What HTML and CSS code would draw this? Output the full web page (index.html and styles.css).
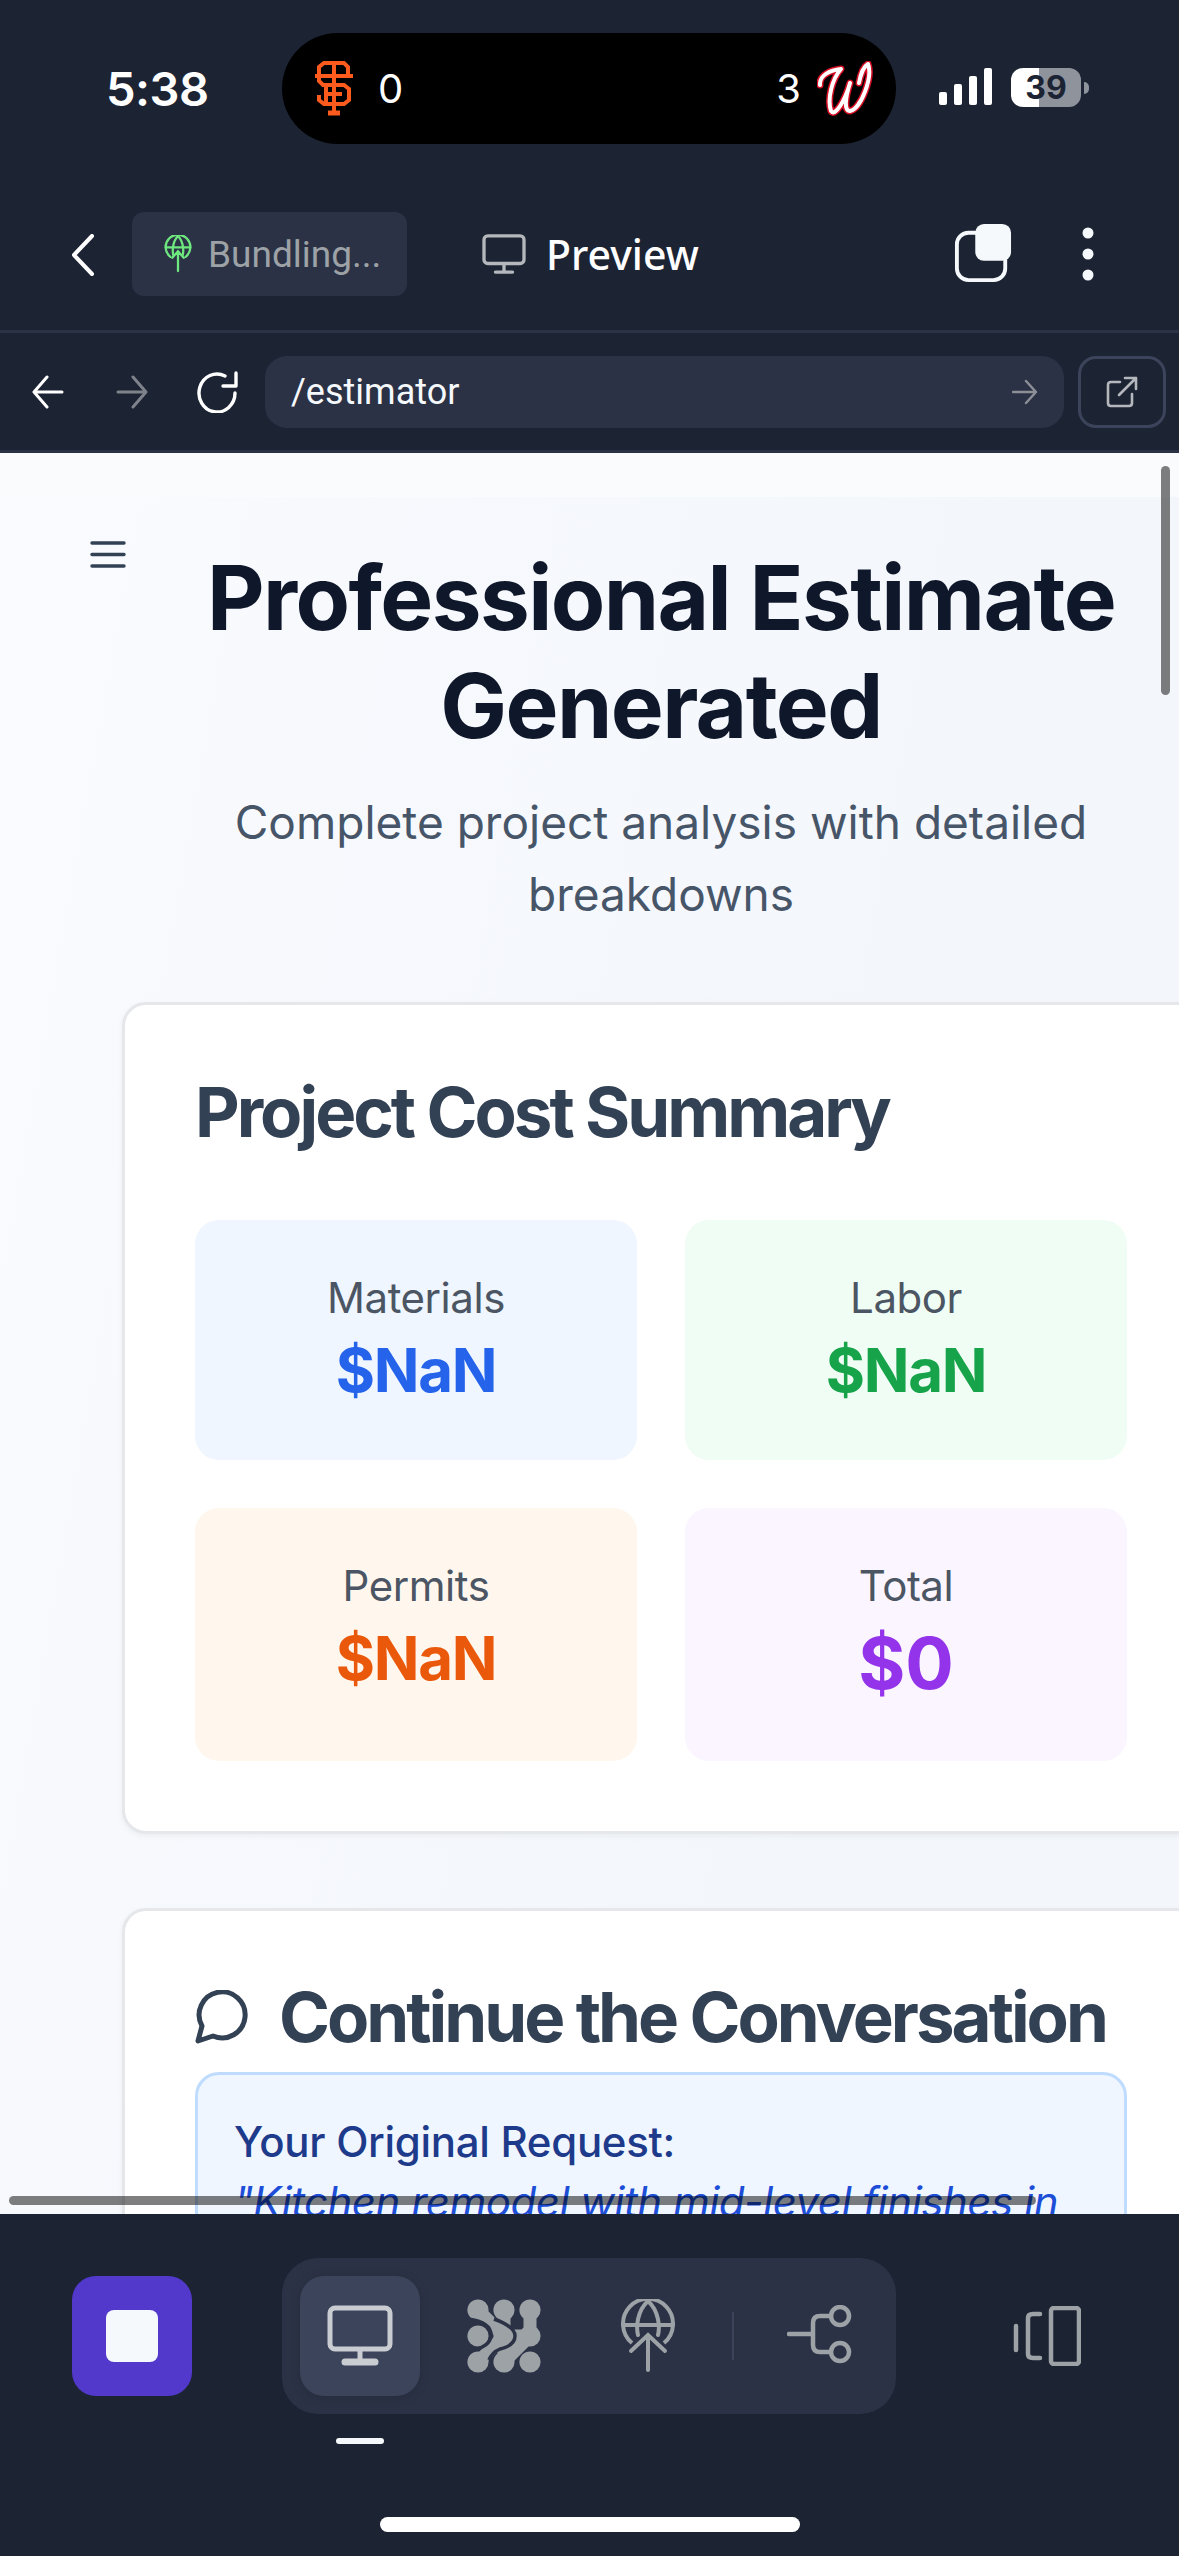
FILE: index.html
```html
<!DOCTYPE html>
<html>
    <head>
        <meta charset="UTF-8">
        <title>Professional Estimate Generated</title>
        <link rel="stylesheet" href="styles.css">
    </head>
    <body>
        <div class="status-bar">
            <span class="clock">5:38</span>
            <div class="island">
                <svg class="team-logo" width="38" height="55" viewBox="0 0 38 55" fill="none" stroke="#fd5a1e" stroke-width="4">
                    <path d="M33 15V6L29 2H9L4 6V20L8 24H29L34 28V39L29 43H9L4 39V34"/>
                    <path d="M0 15H38M19 2V53M11 33H27M11 24V43"/>
                    <path d="M13 52H25" stroke-width="5"/>
                </svg>
                <span class="score">0</span>
                <span class="score score-right">3</span>
                <svg class="team-logo" width="56" height="56" viewBox="0 0 56 56" fill="none" stroke-linecap="round" stroke-linejoin="round">
                    <path class="w-outline" d="M3 24C2 14 14 9 24 8C15 18 10 38 14 50C18 56 28 40 33 22C28 38 27 50 33 50C44 48 56 16 51 3C46 6 43 16 42 22"/>
                    <path class="w-fill" d="M3 24C2 14 14 9 24 8C15 18 10 38 14 50C18 56 28 40 33 22C28 38 27 50 33 50C44 48 56 16 51 3C46 6 43 16 42 22"/>
                </svg>
            </div>
            <svg class="signal" width="54" height="37" viewBox="0 0 54 37" fill="#fff">
                <rect x="0" y="24" width="8" height="13" rx="2"/>
                <rect x="15" y="16" width="8" height="21" rx="2"/>
                <rect x="30" y="8" width="8" height="29" rx="2"/>
                <rect x="45" y="0" width="8" height="37" rx="2"/>
            </svg>
            <div class="battery"><span>39</span></div>
            <div class="battery-nub"></div>
        </div>

        <div class="top-bar">
            <svg class="top-back" width="24" height="42" viewBox="0 0 24 42" fill="none" stroke="#fff" stroke-width="4" stroke-linecap="round" stroke-linejoin="round">
                <path d="M21 2L3 21L21 40"/>
            </svg>
            <div class="bundling">
                <svg width="28" height="38" viewBox="0 0 28 40" fill="none" stroke="#6ee77f" stroke-width="2.4" stroke-linecap="round">
                    <path d="M6 23A13 13 0 1 1 22 23"/>
                    <path d="M14 1C8 7 8 17 9 21M14 1C20 7 20 17 19 21M1 13H27"/>
                    <path d="M14 38V17M8 24L14 17L20 24"/>
                </svg>
                <span>Bundling...</span>
            </div>
            <div class="preview-tab">
                <svg width="46" height="40" viewBox="0 0 46 42" fill="none" stroke="#b4b8bd" stroke-width="3.5" stroke-linejoin="round" stroke-linecap="round">
                    <rect x="2" y="2" width="42" height="29" rx="4"/>
                    <path d="M23 31V39M14 40H32"/>
                </svg>
                <span>Preview</span>
            </div>
            <svg class="tabs-icon" width="58" height="58" viewBox="0 0 58 60" fill="none">
                <rect x="2" y="9" width="50" height="49" rx="12" stroke="#f5f9fc" stroke-width="4"/>
                <rect x="21" y="0" width="37" height="38" rx="9" fill="#f5f9fc"/>
            </svg>
            <svg class="kebab" width="12" height="54" viewBox="0 0 12 54" fill="#f5f9fc">
                <circle cx="6" cy="6" r="5.5"/>
                <circle cx="6" cy="27" r="5.5"/>
                <circle cx="6" cy="48" r="5.5"/>
            </svg>
        </div>

        <div class="nav-bar">
            <svg class="nav-icon" width="32" height="34" viewBox="0 0 32 34" fill="none" stroke="#fff" stroke-width="3" stroke-linecap="round" stroke-linejoin="round">
                <path d="M30 17H3M15 2L2 17L15 32"/>
            </svg>
            <svg class="nav-icon nav-forward" width="32" height="34" viewBox="0 0 32 34" fill="none" stroke="#7e838b" stroke-width="3" stroke-linecap="round" stroke-linejoin="round">
                <path d="M2 17H29M17 2L30 17L17 32"/>
            </svg>
            <svg class="nav-reload" width="46" height="42" viewBox="0 0 46 42" fill="none" stroke="#fff" stroke-width="3.4" stroke-linecap="round" stroke-linejoin="round">
                <path d="M40 22A18 19 0 1 1 30 5"/>
                <path d="M41 2V15H28"/>
            </svg>
            <div class="url-box">
                <span>/estimator</span>
                <svg width="26" height="26" viewBox="0 0 26 26" fill="none" stroke="#8c9096" stroke-width="2.4" stroke-linecap="round" stroke-linejoin="round">
                    <path d="M1 13H24M14 2L24 13L14 24"/>
                </svg>
            </div>
            <div class="open-btn">
                <svg width="32" height="32" viewBox="0 0 32 32" fill="none" stroke="#b4b8bd" stroke-width="2.6" stroke-linecap="round" stroke-linejoin="round">
                    <path d="M14 6H5Q2 6 2 9V27Q2 30 5 30H23Q26 30 26 27V18"/>
                    <path d="M13 19L30 2M19 2H30V13"/>
                </svg>
            </div>
        </div>

        <div class="page">
            <svg class="menu-icon" width="36" height="27" viewBox="0 0 36 27" fill="none" stroke="#334155" stroke-width="3.4" stroke-linecap="round">
                <path d="M2 2H34M2 13.5H34M2 25H34"/>
            </svg>
            <div class="content">
                <div class="hero">
                    <h1>Professional Estimate Generated</h1>
                    <p>Complete project analysis with detailed breakdowns</p>
                </div>

                <div class="card">
                    <h2>Project Cost Summary</h2>
                    <div class="tile-grid">
                        <div class="tile tile-blue">
                            <div class="tile-label">Materials</div>
                            <div class="tile-value">$NaN</div>
                        </div>
                        <div class="tile tile-green">
                            <div class="tile-label">Labor</div>
                            <div class="tile-value">$NaN</div>
                        </div>
                        <div class="tile tile-orange">
                            <div class="tile-label">Permits</div>
                            <div class="tile-value">$NaN</div>
                        </div>
                        <div class="tile tile-purple">
                            <div class="tile-label">Total</div>
                            <div class="tile-value tile-total">$0</div>
                        </div>
                    </div>
                </div>

                <div class="card">
                    <h2 class="chat-title">
                        <svg width="54" height="54" viewBox="0 0 54 54" fill="none" stroke="#334155" stroke-width="5" stroke-linejoin="round">
                            <path d="M3 51L7 36A23 23 0 1 1 18 46Z"/>
                        </svg>
                        Continue the Conversation
                    </h2>
                    <div class="request-box">
                        <div class="request-title">Your Original Request:</div>
                        <div class="request-text">"Kitchen remodel with mid-level finishes in</div>
                    </div>
                </div>
            </div>
            <div class="scroll-v"></div>
            <div class="scroll-h"></div>
        </div>

        <div class="bottom-bar">
            <div class="dock">
                <div class="stop-btn"><div class="stop-square"></div></div>
                <div class="tool-tabs">
                    <div class="tool-tab tool-tab-active">
                        <svg width="66" height="62" viewBox="0 0 66 62" fill="none" stroke="#c9ccd1" stroke-width="5" stroke-linejoin="round">
                            <rect x="3" y="3" width="60" height="41" rx="5"/>
                            <path d="M33 44V56"/>
                            <path d="M18 57H48" stroke-width="7" stroke-linecap="round"/>
                        </svg>
                    </div>
                    <div class="tool-tab">
                        <svg width="76" height="76" viewBox="0 0 76 76">
                            <g fill="#9da2a6">
                                <circle cx="12" cy="12" r="10.6"/><circle cx="38" cy="12" r="10.6"/><circle cx="64" cy="12" r="10.6"/>
                                <circle cx="12" cy="38" r="10.6"/><circle cx="38" cy="38" r="10.6"/><circle cx="64" cy="38" r="10.6"/>
                                <circle cx="12" cy="64" r="10.6"/><circle cx="38" cy="64" r="10.6"/><circle cx="64" cy="64" r="10.6"/>
                            </g>
                            <path d="M12 12L38 38L12 64M38 12V64M64 12V38L38 64M38 38H64" fill="none" stroke="#9da2a6" stroke-width="13" stroke-linecap="round" stroke-linejoin="round"/>
                            <path d="M2 21C17 23 25 28 25 37C25 46 15 51 2 53M28 21C42 26 49 31 49 38C49 45 42 49 34 51C29 53 25 57 23 62" fill="none" stroke="#2b3245" stroke-width="3.5"/>
                        </svg>
                    </div>
                    <div class="tool-tab">
                        <svg width="56" height="74" viewBox="0 0 56 74" fill="none" stroke="#9da2a6" stroke-width="4" stroke-linecap="round">
                            <path d="M12 44A25 25 0 1 1 44 44" stroke-linecap="butt"/>
                            <path d="M28 2C17 12 16 28 18 36M28 2C39 12 40 28 38 36M3 26H53"/>
                            <path d="M28 71V38M11 52L28 36L45 52"/>
                        </svg>
                    </div>
                    <div class="tool-divider"></div>
                    <div class="tool-tab tool-tab-branch">
                        <svg width="66" height="62" viewBox="0 0 66 62" fill="none" stroke="#9da2a6" stroke-width="4.5" stroke-linecap="round">
                            <circle cx="53" cy="11" r="9"/>
                            <circle cx="53" cy="47" r="9"/>
                            <path d="M2 29H26M44 11H33Q26 11 26 18V40Q26 47 33 47H44"/>
                        </svg>
                    </div>
                </div>
                <svg class="panel-icon" width="68" height="60" viewBox="0 0 68 60" fill="none" stroke="#9da2a6" stroke-width="4.5" stroke-linecap="round" stroke-linejoin="round">
                    <rect x="38" y="2" width="28" height="56" rx="3"/>
                    <path d="M27 8H20Q15 8 15 12V48Q15 52 20 52H27"/>
                    <path d="M3 20V44"/>
                </svg>
            </div>
            <div class="tab-marker"></div>
            <div class="home-bar"></div>
        </div>
    </body>
</html>
```

FILE: styles.css
```css
* {
    box-sizing: border-box;
}
html, body {
    margin: 0;
    padding: 0;
}
body {
    width: 1179px;
    height: 2556px;
    overflow: hidden;
    display: flex;
    flex-direction: column;
    background-color: #1c2333;
    font-family: 'Inter', sans-serif;
}
svg {
    display: block;
    flex-shrink: 0;
}

/* status bar */
.status-bar {
    height: 190px;
    padding: 33px 0 0 106px;
    display: flex;
    align-items: flex-start;
    color: #fff;
}
.clock {
    width: 176px;
    height: 111px;
    line-height: 111px;
    font-size: 47px;
    font-weight: 600;
    letter-spacing: -0.5px;
}
.island {
    width: 614px;
    height: 111px;
    padding: 0 23px 0 33px;
    border-radius: 56px;
    background-color: #000;
    display: flex;
    align-items: center;
    gap: 25px;
}
.score {
    font-size: 40px;
    font-weight: 400;
}
.score-right {
    margin-left: auto;
    margin-right: -9px;
}
.w-outline {
    stroke: #d50f25;
    stroke-width: 7;
}
.w-fill {
    stroke: #fff;
    stroke-width: 4;
}
.signal {
    margin: 35px 0 0 43px;
}
.battery {
    width: 70px;
    height: 39px;
    margin: 35px 0 0 18px;
    border-radius: 12px;
    background: linear-gradient(90deg, #fff 40%, #8f939c 40%);
    color: #1c2333;
    font-size: 32px;
    font-weight: 700;
    line-height: 39px;
    text-align: center;
}
.battery-nub {
    width: 5px;
    height: 12px;
    margin: 49px 0 0 3px;
    border-radius: 0 6px 6px 0;
    background-color: #8f939c;
}

/* top bar */
.top-bar {
    height: 140px;
    padding: 22px 0 0 71px;
    display: flex;
    align-items: flex-start;
    color: #fff;
}
.top-back {
    margin: 22px 37px 0 0;
}
.bundling {
    width: 275px;
    height: 84px;
    padding-left: 32px;
    border-radius: 12px;
    background-color: #2b3245;
    display: flex;
    align-items: center;
    gap: 16px;
    color: #9da2a6;
    font-family: 'Roboto', sans-serif;
    font-size: 37px;
}
.preview-tab {
    height: 84px;
    margin-left: 74px;
    display: flex;
    align-items: center;
    gap: 19px;
    font-family: 'Noto Sans', sans-serif;
    font-size: 41px;
    font-weight: 500;
}
.tabs-icon {
    margin: 12px 0 0 auto;
}
.kebab {
    margin: 15px 85px 0 70px;
}

/* url bar */
.nav-bar {
    height: 123px;
    padding: 23px 13px 0 32px;
    border-top: 3px solid #2b3245;
    border-bottom: 3px solid #2b3245;
    display: flex;
    align-items: flex-start;
}
.nav-icon {
    margin-top: 19px;
}
.nav-forward {
    margin-left: 52px;
}
.nav-reload {
    margin: 15px 0 0 47px;
}
.url-box {
    width: 800px;
    height: 72px;
    margin-left: 24px;
    padding: 0 26px 0 26px;
    border-radius: 22px;
    background-color: #2b3245;
    display: flex;
    align-items: center;
    justify-content: space-between;
    color: #f5f9fc;
    font-family: 'Roboto', sans-serif;
    font-size: 36px;
}
.open-btn {
    width: 88px;
    height: 72px;
    margin-left: 14px;
    border: 3px solid #3c445c;
    border-radius: 18px;
    display: flex;
    align-items: center;
    justify-content: center;
}

/* page */
.page {
    position: relative;
    flex: 1;
    overflow: hidden;
    background: linear-gradient(100deg, #f9fbfe 0%, #f3f6fb 70%) 0 44px no-repeat, #f9fbfd;
}
.content {
    width: 1078px;
    margin-left: 122px;
    padding-top: 91px;
}
.menu-icon {
    position: absolute;
    left: 90px;
    top: 88px;
}
.hero {
    text-align: center;
    margin-bottom: 72px;
}
.hero h1 {
    margin: 0 70px 26px;
    font-size: 89px;
    line-height: 108px;
    font-weight: 700;
    letter-spacing: -1.6px;
    color: #0f172a;
}
.hero p {
    margin: 0 60px;
    font-size: 46px;
    line-height: 72px;
    color: #475569;
}
.card {
    padding: 70px;
    margin-bottom: 74px;
    border: 3px solid #e5e7eb;
    border-radius: 24px;
    background-color: #fff;
    box-shadow: 0 2px 6px rgba(0, 0, 0, 0.05);
}
.card h2 {
    margin: 0 0 71px;
    font-size: 69px;
    line-height: 74px;
    font-weight: 700;
    letter-spacing: -3px;
    color: #334155;
}
.tile-grid {
    display: grid;
    grid-template-columns: 1fr 1fr;
    gap: 48px;
}
.tile {
    padding: 48px;
    border-radius: 24px;
    text-align: center;
}
.tile-label {
    font-size: 42px;
    line-height: 60px;
    letter-spacing: -0.45px;
    color: #4b5563;
}
.tile-value {
    font-size: 60px;
    line-height: 84px;
    font-weight: 700;
    letter-spacing: -1.3px;
}
.tile-total {
    font-size: 72px;
    line-height: 93px;
    margin-bottom: 4px;
    letter-spacing: 0;
}
.tile-blue {
    background-color: #eff6ff;
    color: #2563eb;
}
.tile-green {
    background-color: #f0fdf4;
    color: #16a34a;
}
.tile-orange {
    background-color: #fff7ed;
    color: #ea580c;
}
.tile-purple {
    background-color: #faf5ff;
    color: #9333ea;
}
.card h2.chat-title {
    margin-bottom: 19px;
    line-height: 72px;
    display: flex;
    align-items: center;
    gap: 30px;
}
.request-box {
    padding: 37px 36px;
    border: 3px solid #bfdbfe;
    border-radius: 24px;
    background-color: #eff6ff;
}
.request-title {
    font-size: 42px;
    line-height: 60px;
    font-weight: 500;
    letter-spacing: -0.3px;
    color: #1e3a8a;
}
.request-text {
    font-size: 42px;
    line-height: 60px;
    font-style: italic;
    letter-spacing: -0.5px;
    white-space: nowrap;
    color: #1d4ed8;
}
.scroll-v {
    position: absolute;
    left: 1161px;
    top: 13px;
    width: 9px;
    height: 229px;
    border-radius: 5px;
    background-color: rgba(0, 0, 0, 0.5);
}
.scroll-h {
    position: absolute;
    left: 9px;
    bottom: 9px;
    width: 1027px;
    height: 9px;
    border-radius: 5px;
    background-color: rgba(0, 0, 0, 0.5);
}

/* bottom bar */
.bottom-bar {
    height: 342px;
    padding-top: 44px;
    background-color: #1c2333;
}
.dock {
    height: 156px;
    padding-left: 72px;
    display: flex;
    align-items: center;
}
.stop-btn {
    width: 120px;
    height: 120px;
    border-radius: 24px;
    background-color: #5239cc;
    display: flex;
    align-items: center;
    justify-content: center;
}
.stop-square {
    width: 52px;
    height: 52px;
    border-radius: 8px;
    background-color: #f5f9fc;
}
.tool-tabs {
    width: 614px;
    height: 156px;
    margin-left: 90px;
    padding: 18px;
    border-radius: 36px;
    background-color: #2b3245;
    display: flex;
    align-items: center;
    gap: 24px;
}
.tool-tab {
    width: 120px;
    height: 120px;
    border-radius: 24px;
    display: flex;
    align-items: center;
    justify-content: center;
}
.tool-tab-active {
    background-color: #3c445c;
    box-shadow: 0 2px 12px rgba(0, 0, 0, 0.12);
}
.tool-tab-branch {
    padding-left: 3px;
}
.tool-divider {
    width: 2px;
    height: 48px;
    background-color: #3c445c;
}
.panel-icon {
    margin-left: 117px;
}
.tab-marker {
    width: 48px;
    height: 6px;
    margin: 24px 0 0 336px;
    border-radius: 3px;
    background-color: #f5f9fc;
}
.home-bar {
    width: 420px;
    height: 15px;
    margin: 73px auto 0;
    border-radius: 8px;
    background-color: #fff;
}
```
